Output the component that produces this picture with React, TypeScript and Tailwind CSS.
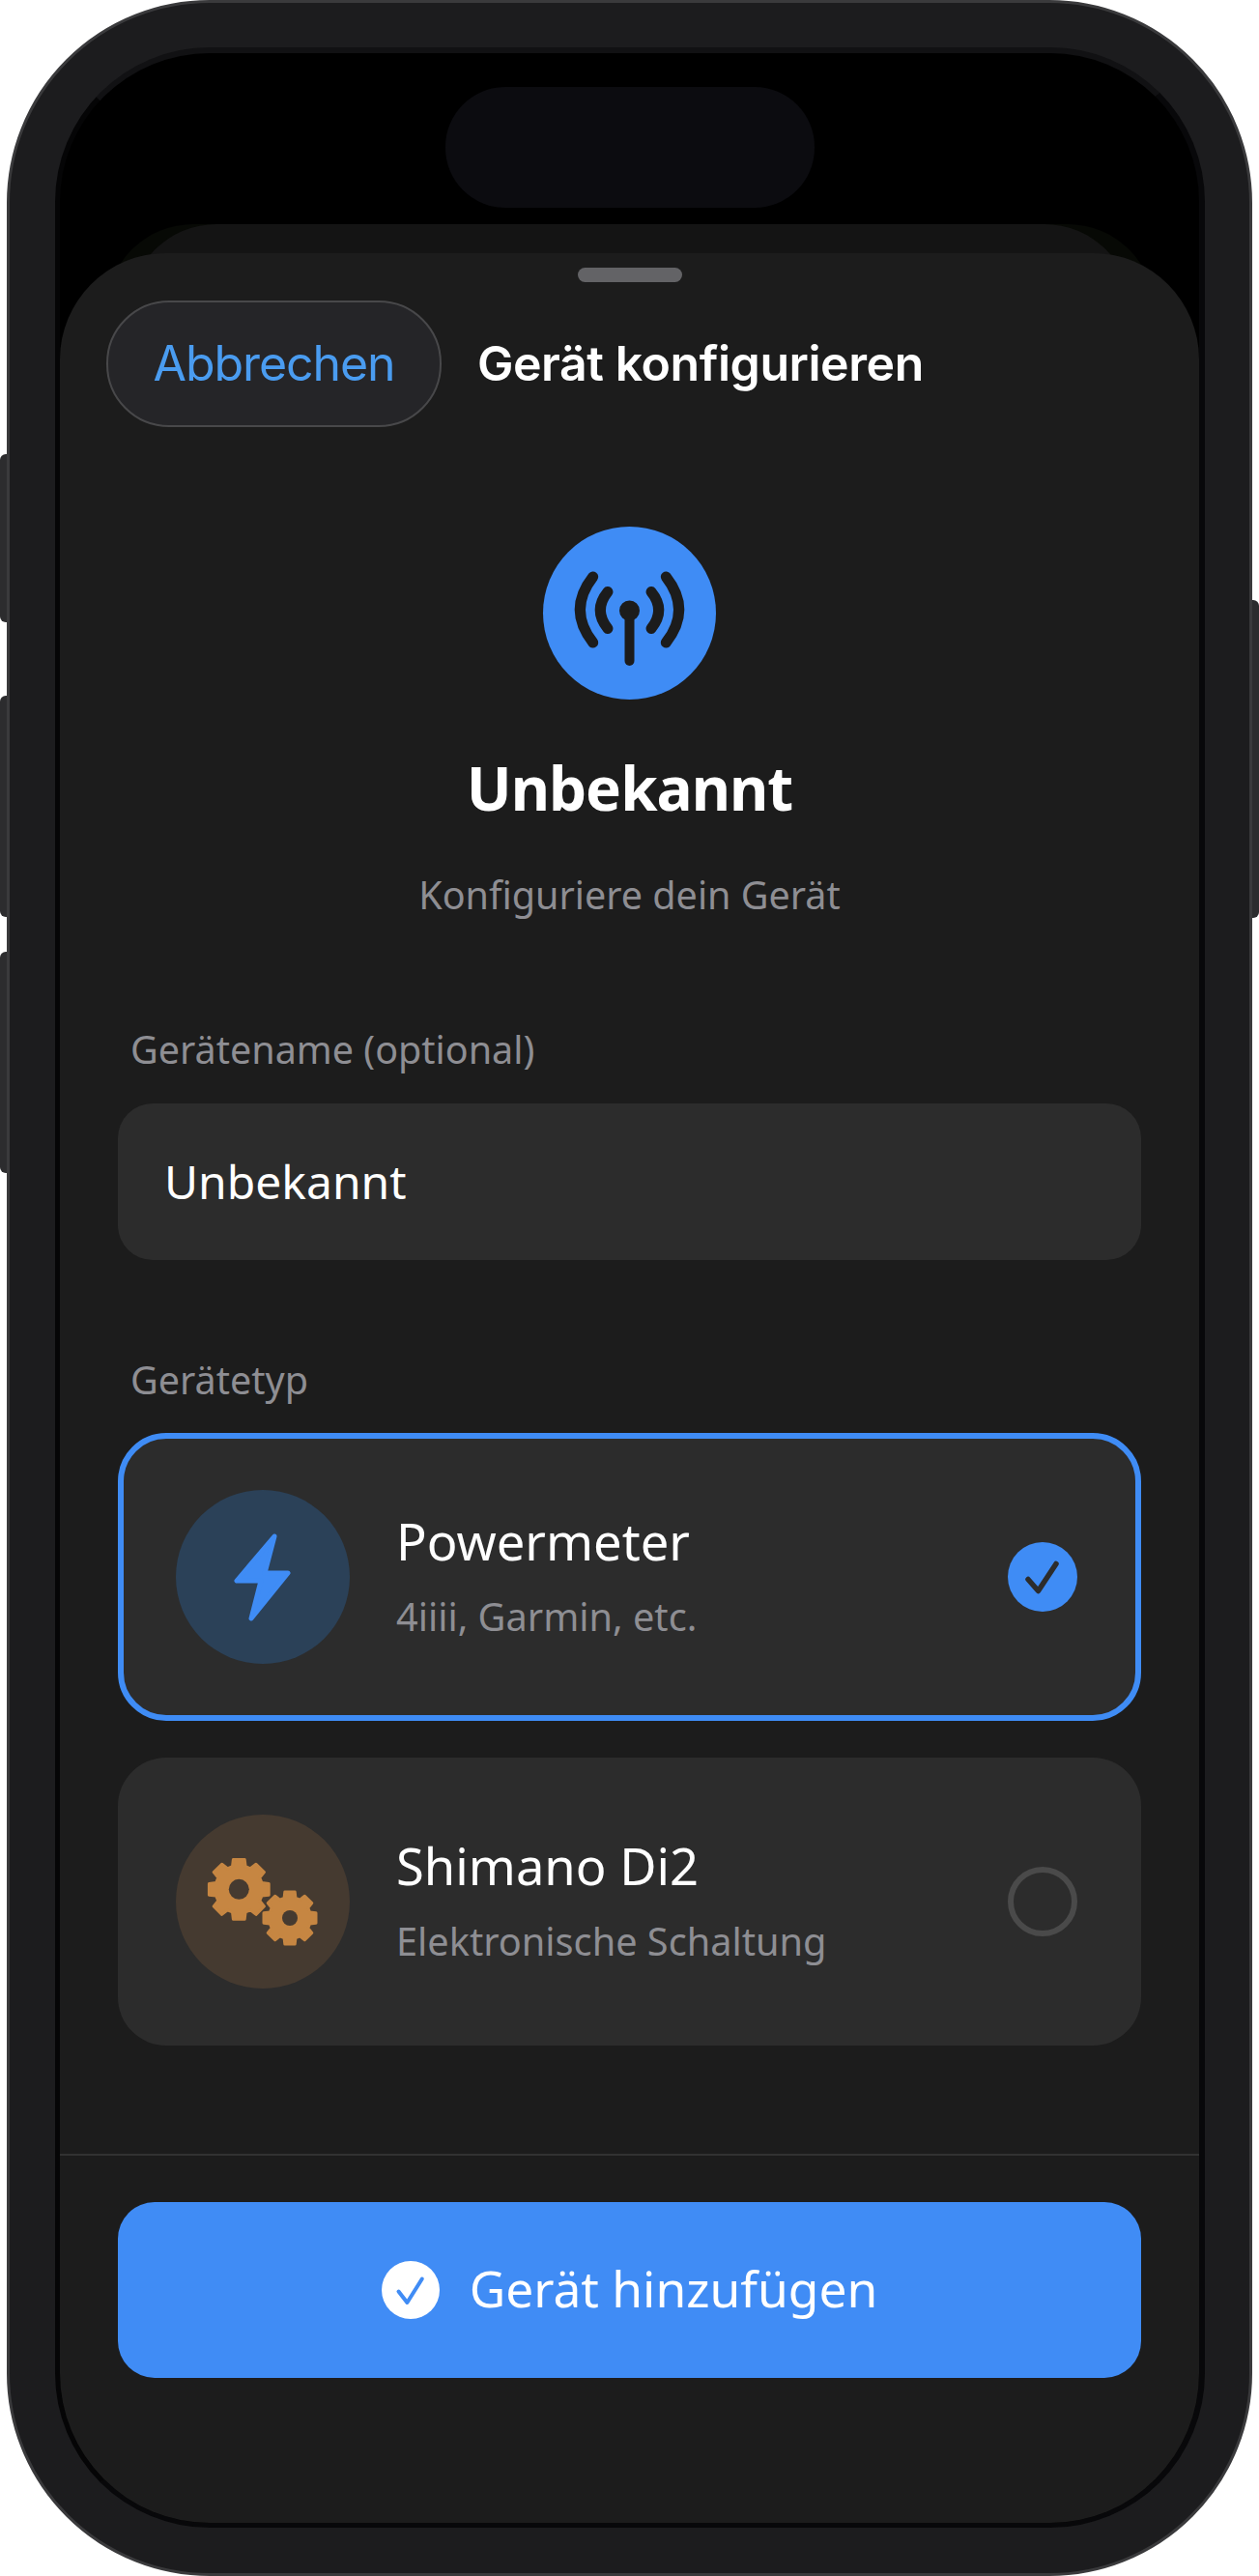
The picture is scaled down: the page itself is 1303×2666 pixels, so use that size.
import type { ReactNode } from "react";

// outline of an 8 tooth gear, tooth pointing up at i = 0
function gearPath(cx: number, cy: number, r: number) {
  const pts: string[] = [];
  for (let i = 0; i < 8; i++) {
    const a = ((i * 45 - 90) * Math.PI) / 180;
    for (const [d, rad] of [
      [-0.28, r * 0.78],
      [-0.19, r],
      [0.19, r],
      [0.28, r * 0.78],
    ]) {
      pts.push(`${(cx + rad * Math.cos(a + d)).toFixed(1)} ${(cy + rad * Math.sin(a + d)).toFixed(1)}`);
    }
  }
  return `M${pts.join("L")}Z`;
}

function DeviceCard({
  selected,
  title,
  subtitle,
  circle,
  icon,
}: {
  selected?: boolean;
  title: string;
  subtitle: string;
  circle: string;
  icon: ReactNode;
}) {
  return (
    <div
      className={
        selected
          ? "flex items-center h-[298px] rounded-[50px] bg-[#2c2c2c] border-[6px] border-[#3f8cf5] pl-[54px] pr-[60px]"
          : "flex items-center h-[298px] rounded-[50px] bg-[#2c2c2c] pl-[60px] pr-[66px]"
      }
    >
      <div className={`w-[180px] h-[180px] rounded-full shrink-0 ${circle}`}>{icon}</div>
      <div className="flex-1 ml-[48px] pb-[4px]">
        <div className="text-[52.5px] leading-[64px] text-white">{title}</div>
        <div className="mt-[22px] text-[39.7px] leading-[48px] text-[#8e8e93]">{subtitle}</div>
      </div>
      {selected ? (
        <div className="w-[72px] h-[72px] rounded-full bg-[#3f8cf5]">
          <svg viewBox="0 0 72 72" className="w-full h-full" fill="none" stroke="#2c2c2c" strokeWidth="5.5" strokeLinecap="round" strokeLinejoin="round">
            <path d="M21 38.5L31.5 50.5L50 22.5" />
          </svg>
        </div>
      ) : (
        <div className="w-[72px] h-[72px] rounded-full border-[6px] border-[#4a4a4a]" />
      )}
    </div>
  );
}

export default function App() {
  return (
    <div className="relative w-[1303px] h-[2666px] bg-white overflow-hidden">
      {/* Side buttons */}
      <div className="absolute left-0 top-[470px] w-[10px] h-[174px] rounded-l-[6px] bg-[#2c2c2e]" />
      <div className="absolute left-0 top-[720px] w-[10px] h-[229px] rounded-l-[6px] bg-[#2c2c2e]" />
      <div className="absolute left-0 top-[985px] w-[10px] h-[229px] rounded-l-[6px] bg-[#2c2c2e]" />
      <div className="absolute right-0 top-[621px] w-[12px] h-[329px] rounded-r-[6px] bg-[#2c2c2e]" />

      {/* Phone frame */}
      <div className="absolute left-[7px] top-0 w-[1289px] h-[2666px] rounded-[210px] border-[3px] border-[#3a3a3c] bg-[#1c1c1e] pt-[46px] pb-[47px] pl-[47px] pr-[46px]">
        <div className="relative h-full rounded-[160px] border-l-[5px] border-r-[6px] border-t-[6px] border-b-[5px] border-l-[#050506] border-r-[#08080a] border-t-[#111113] border-b-[#08080a] bg-black overflow-hidden font-['Noto_Sans',sans-serif]">
          {/* Dynamic island */}
          <div className="absolute left-[399px] top-[35px] w-[382px] h-[125px] rounded-[62px] bg-[#0c0c10]" />

          {/* Sheets behind */}
          <div className="absolute left-[48px] right-[46px] top-[177px] h-[200px] rounded-t-[90px] bg-[#070905]" />
          <div className="absolute left-[72px] right-[70px] top-[177px] h-[200px] rounded-t-[90px] bg-[#141414]" />

          {/* Sheet */}
          <div className="absolute inset-x-0 bottom-0 top-[207px] rounded-t-[110px] bg-[#1c1c1c] flex flex-col">
            <div className="mx-auto mt-[15px] w-[108px] h-[15px] rounded-[8px] bg-[#636366]" />

            <div className="flex items-center mt-[19px] pl-[48px] font-['Inter',sans-serif]">
              <div className="w-[347px] h-[131px] rounded-[65px] border-2 border-[#48484a] bg-[#252528] flex items-center justify-center text-[50px] tracking-[-1.1px] text-[#4a9cf0]">
                Abbrechen
              </div>
              <div className="ml-[37px] text-[50px] tracking-[-0.45px] font-semibold text-white">Gerät konfigurieren</div>
            </div>

            <div className="mx-auto mt-[103px] w-[179px] h-[179px] rounded-full bg-[#3f8cf5]">
              <svg viewBox="0 0 179 179" className="w-full h-full" fill="none" stroke="#1c1c1c" strokeWidth="11" strokeLinecap="round">
                <path d="M89.5 87V139" strokeWidth="10" />
                <circle cx="89.5" cy="87" r="5" fill="#1c1c1c" />
                <path d="M67 67.5Q51.6 86.5 67 105.5" />
                <path d="M112 67.5Q127.4 86.5 112 105.5" />
                <path d="M51.7 52Q25 86 51.7 120" />
                <path d="M127.3 52Q154 86 127.3 120" />
              </svg>
            </div>

            <div className="mt-[51px] text-center text-[62px] tracking-[-1px] leading-[80px] font-bold text-white">Unbekannt</div>
            <div className="mt-[46px] text-center text-[39.5px] leading-[50px] text-[#8e8e93]">Konfiguriere dein Gerät</div>

            <div className="px-[60px]">
              <div className="mt-[111px] pl-[13px] text-[39.5px] leading-[48px] text-[#8e8e93]">Gerätename (optional)</div>
              <div className="mt-[32px] h-[162px] rounded-[36px] bg-[#2c2c2c] flex items-center pl-[48px] text-[48px] text-white">
                Unbekannt
              </div>
              <div className="mt-[100px] pl-[13px] text-[39.5px] leading-[48px] text-[#8e8e93]">Gerätetyp</div>
              <div className="mt-[31px] flex flex-col gap-[38px]">
                <DeviceCard
                  selected
                  title="Powermeter"
                  subtitle="4iiii, Garmin, etc."
                  circle="bg-[#2b4158]"
                  icon={
                    <svg viewBox="0 0 180 180" className="w-full h-full" fill="#3f8cf5" stroke="#3f8cf5" strokeWidth="5" strokeLinejoin="round">
                      <path d="M102 48L63 94H88L78 133L116 86H92Z" />
                    </svg>
                  }
                />
                <DeviceCard
                  title="Shimano Di2"
                  subtitle="Elektronische Schaltung"
                  circle="bg-[#453a30]"
                  icon={
                    <svg viewBox="0 0 180 180" className="w-full h-full" fill="#c68642" stroke="#c68642" strokeWidth="3" strokeLinejoin="round">
                      <path d={gearPath(65.3, 77.3, 31.5)} />
                      <circle cx="65.3" cy="77.3" r="10.5" fill="#453a30" stroke="none" />
                      <path d={gearPath(118, 107, 27.5)} />
                      <circle cx="118" cy="107" r="8" fill="#453a30" stroke="none" />
                    </svg>
                  }
                />
              </div>
            </div>

            <div className="mt-[112px] h-[2px] bg-[#323232]" />
            <div className="px-[60px] pt-[48px]">
              <div className="h-[182px] rounded-[38px] bg-[#408cf5] flex items-center justify-center text-[51.5px] text-white">
                <div className="w-[60px] h-[60px] rounded-full bg-white mr-[31px]">
                  <svg viewBox="0 0 60 60" className="w-full h-full" fill="none" stroke="#408cf5" strokeWidth="4" strokeLinecap="round" strokeLinejoin="round">
                    <path d="M17.5 31.5L26.4 43L41.8 18.5" />
                  </svg>
                </div>
                <span className="pb-[3px]">Gerät hinzufügen</span>
              </div>
            </div>
          </div>
        </div>
      </div>
    </div>
  );
}
